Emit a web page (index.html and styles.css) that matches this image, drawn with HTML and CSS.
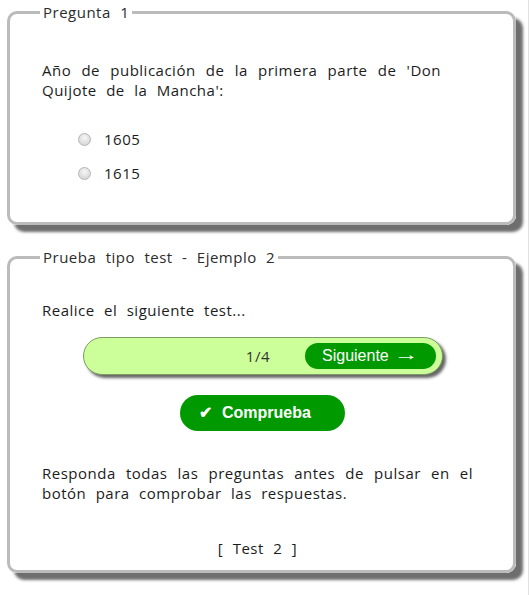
FILE: index.html
```html
<!DOCTYPE html>
<html lang="es">
<head>
<meta charset="utf-8">
<title>Pruebas</title>
<link rel="stylesheet" href="styles.css">
</head>
<body>
<div class="page">
  <fieldset class="box box-question">
    <legend>Pregunta 1</legend>
    <p class="question">Año de publicación de la primera parte de 'Don Quijote de la Mancha':</p>
    <ul class="options">
      <li class="option"><span class="radio"></span><span>1605</span></li>
      <li class="option"><span class="radio"></span><span>1615</span></li>
    </ul>
  </fieldset>

  <fieldset class="box box-test">
    <legend>Prueba tipo test - Ejemplo 2</legend>
    <p class="intro">Realice el siguiente test...</p>
    <div class="progress">
      <span class="count">1/4</span>
      <span class="next">Siguiente<span class="arrow">→</span></span>
    </div>
    <div class="check-row"><span class="check"><span class="tick">✔</span>Comprueba</span></div>
    <p class="note">Responda todas las preguntas antes de pulsar en el botón para comprobar las respuestas.</p>
    <p class="tag">[ Test 2 ]</p>
  </fieldset>
</div>
</body>
</html>
```

FILE: styles.css
```css
html, body {
  margin: 0;
  padding: 0;
  background: #fff;
}
.page {
  width: 529px;
  height: 595px;
  box-sizing: border-box;
  padding: 2px 0 0 7px;
  border-right: 1px solid #e2e2e2;
  font-family: "Open Sans", "Noto Sans", sans-serif;
  font-size: 15px;
  line-height: 20px;
  letter-spacing: 0.5px;
  word-spacing: 5px;
  color: #1c1c1c;
}
.box {
  margin: 0;
  width: 509px;
  box-sizing: border-box;
  border: 3px solid #bbb;
  border-radius: 10px;
  padding: 0 40px 0 32px;
  box-shadow: 7px 7px 3px #6e6e6e;
  background: #fff;
}
.box legend {
  margin-left: -2px;
  padding: 0 3px;
  color: #2c2c2c;
  line-height: 20px;
}
.box-question {
  padding-bottom: 32px;
}
.box-test {
  margin-top: 22px;
  padding-bottom: 12px;
}
.question {
  margin: 38px 32px 0 0;
  text-align: justify;
}
.options {
  list-style: none;
  margin: 22px 0 0;
  padding: 0 0 0 36px;
}
.option {
  height: 34px;
  display: flex;
  align-items: center;
  gap: 13px;
}
.radio {
  width: 11px;
  height: 11px;
  border-radius: 50%;
  border: 1px solid #b4b4b4;
  background: radial-gradient(circle at 50% 35%, #f6f6f6 0%, #dedede 60%, #cfcfcf 100%);
}
.intro {
  margin: 33px 0 0;
}
.progress {
  margin: 17px 0 0 41px;
  width: 360px;
  height: 38px;
  box-sizing: border-box;
  border: 1px solid #7d9a63;
  border-radius: 19px;
  background: #ccff99;
  box-shadow: 3px 3px 3px #666;
  display: flex;
  align-items: center;
  justify-content: flex-end;
  padding-right: 6px;
}
.count {
  margin-right: 35px;
  color: #333;
  letter-spacing: 0.5px;
}
.next {
  width: 131px;
  height: 26px;
  box-sizing: border-box;
  padding-left: 17px;
  border-radius: 13px;
  background: #009900;
  color: #fff;
  font-family: "Liberation Sans", Arial, sans-serif;
  font-size: 16px;
  letter-spacing: 0;
  word-spacing: 0;
  display: flex;
  align-items: center;
}
.arrow {
  margin-left: 5px;
  display: inline-block;
  transform: translateY(-1px) scaleX(1.55);
  transform-origin: left center;
}
.check-row {
  margin-top: 20px;
  display: flex;
  padding-left: 138px;
}
.check {
  width: 165px;
  height: 36px;
  box-sizing: border-box;
  padding-left: 19px;
  border-radius: 18px;
  background: #009900;
  color: #fff;
  font-family: "Liberation Sans", Arial, sans-serif;
  font-weight: bold;
  font-size: 16px;
  letter-spacing: 0;
  word-spacing: 0;
  display: flex;
  align-items: center;
}
.tick {
  margin-right: 10px;
}
.note {
  margin: 32px 0 0;
  text-align: justify;
}
.tag {
  margin: 35px 0 0;
  text-align: center;
}
```
